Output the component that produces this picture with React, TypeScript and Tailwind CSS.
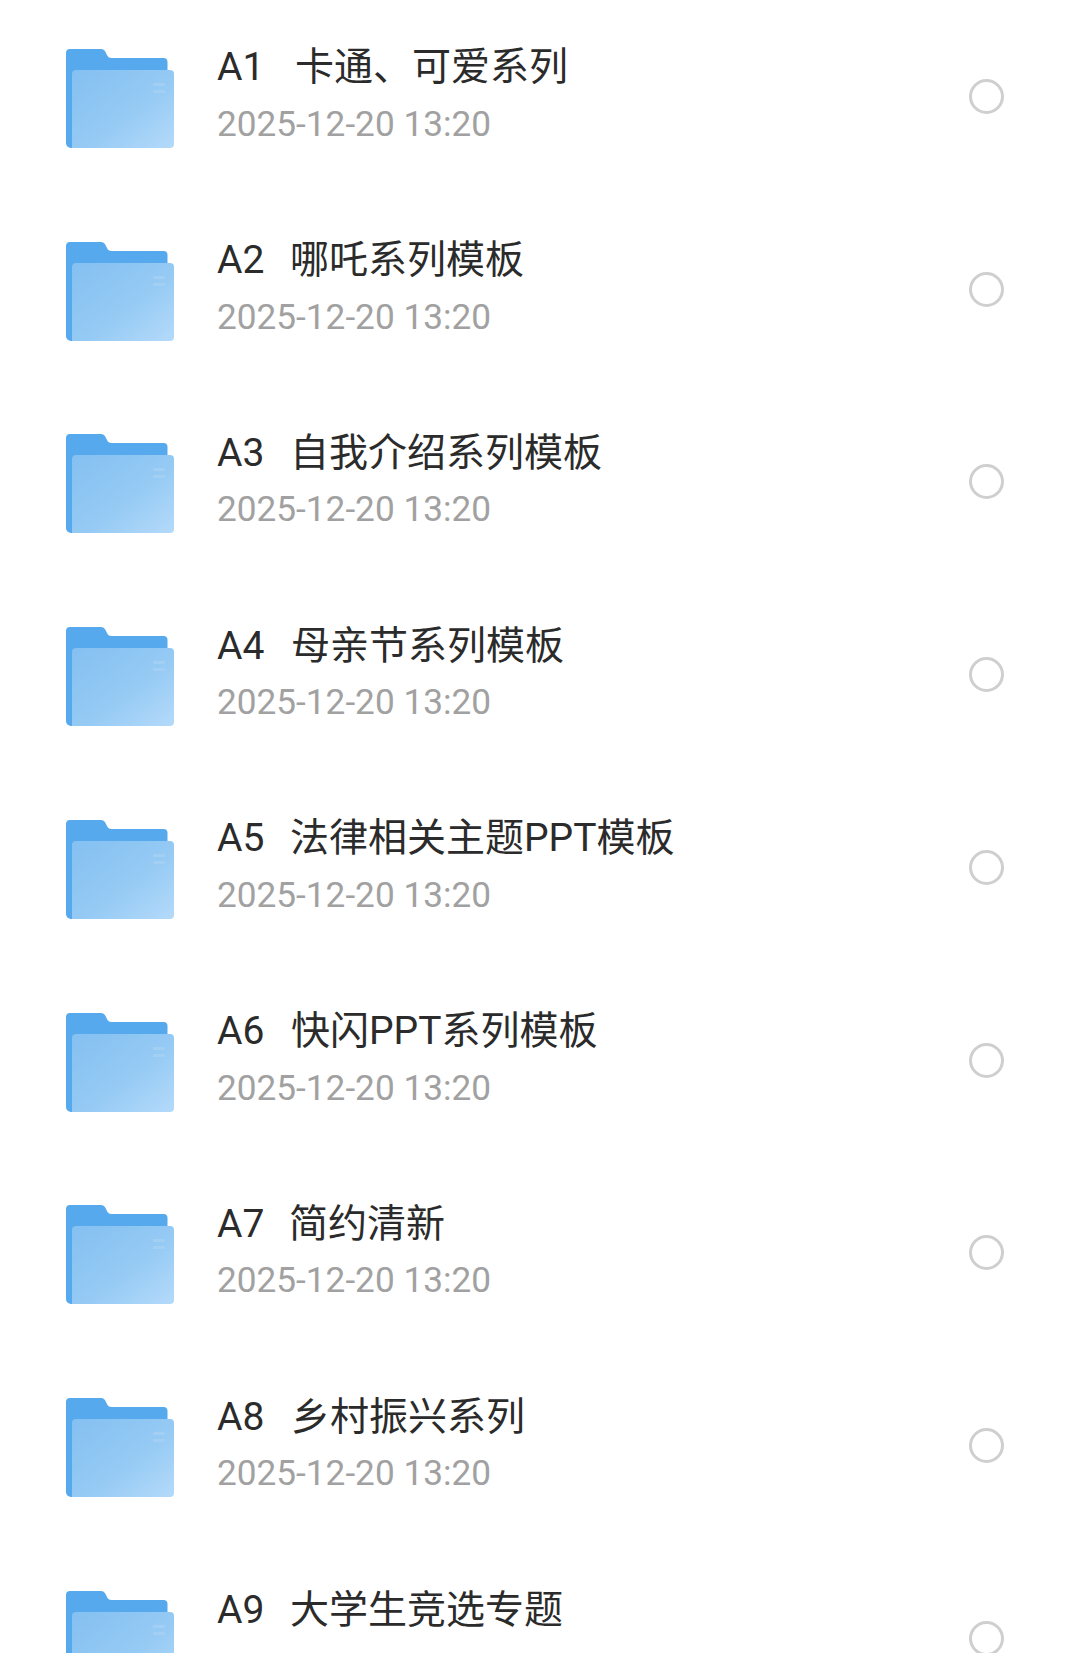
const rows = [
  { code: "A1", name: "卡通、可爱系列", codeWidth: "w-[78px]" },
  { code: "A2", name: "哪吒系列模板", codeWidth: "w-[73px]" },
  { code: "A3", name: "自我介绍系列模板", codeWidth: "w-[73px]" },
  { code: "A4", name: "母亲节系列模板", codeWidth: "w-[74px]" },
  { code: "A5", name: "法律相关主题PPT模板", codeWidth: "w-[73px]" },
  { code: "A6", name: "快闪PPT系列模板", codeWidth: "w-[74px]" },
  { code: "A7", name: "简约清新", codeWidth: "w-[72px]" },
  { code: "A8", name: "乡村振兴系列", codeWidth: "w-[74px]" },
  { code: "A9", name: "大学生竞选专题", codeWidth: "w-[73px]" },
];

function FolderIcon({ id }: { id: string }) {
  return (
    <svg width="110" height="103" viewBox="0 0 110 103" className="shrink-0">
      <defs>
        <linearGradient id={`front-${id}`} x1="0" y1="0" x2="1" y2="1">
          <stop offset="0" stopColor="#84c0f1" />
          <stop offset="0.55" stopColor="#95caf4" />
          <stop offset="1" stopColor="#b4dafa" />
        </linearGradient>
      </defs>
      <path
        d="M1 8a4 4 0 0 1 4-4h31q3 0 4.5 3l2 4q1 2 4 2h52a4 4 0 0 1 4 4v86H6a5 5 0 0 1-5-5z"
        fill="#56a9ec"
      />
      <path
        d="M7 29a4 4 0 0 1 4-4h94a4 4 0 0 1 4 4v70a4 4 0 0 1-4 4H7z"
        fill={`url(#front-${id})`}
      />
      <rect x="88" y="38" width="12" height="3" rx="1" fill="#a3cff5" />
      <rect x="88" y="45" width="12" height="3" rx="1" fill="#a3cff5" />
    </svg>
  );
}

export default function App() {
  return (
    <div className="h-[1658px] w-[1080px] bg-white font-['Roboto','Noto_Sans_CJK_SC',sans-serif]">
      <div className="h-[1653px] overflow-hidden">
        {rows.map((row) => (
          <div key={row.code} className="flex h-[192.78px] items-center pl-[65px] pr-[76px]">
            <FolderIcon id={row.code} />
            <div className="ml-[42px] flex flex-1 flex-col">
              <div className="flex h-[56px] items-center text-[39px] leading-none text-[#2b2b2b]">
                <span className={row.codeWidth}>{row.code}</span>
                <span>{row.name}</span>
              </div>
              <div className="flex h-[57px] items-center text-[35.2px] leading-none text-[#a1a1a1]">
                2025-12-20 13:20
              </div>
            </div>
            <div className="h-[35px] w-[35px] rounded-full border-[3px] border-[#cfcfcf]" />
          </div>
        ))}
      </div>
    </div>
  );
}
